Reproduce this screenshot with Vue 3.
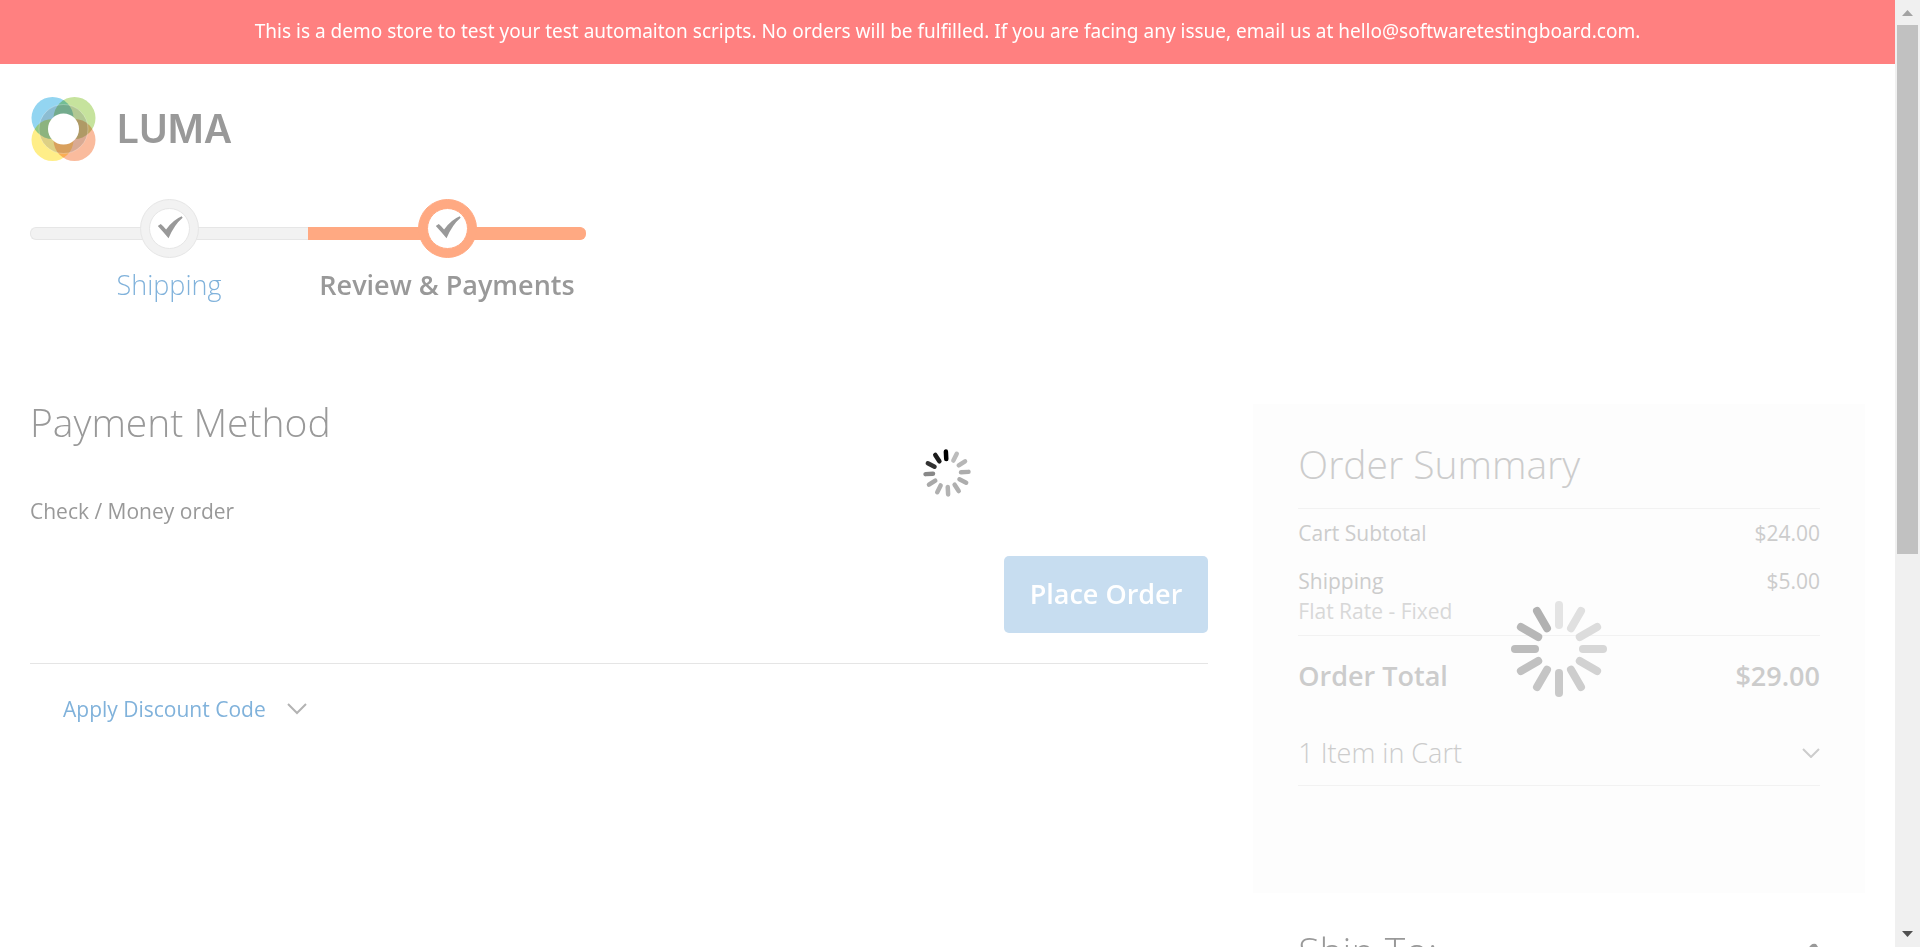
<script setup>
const spokes = (colors) => colors.map((color, i) => ({ color, angle: i * 30 }))

const pageSpokes = spokes([
  '#000000', '#bcbcbc', '#b6b6b6', '#adadad', '#adadad', '#b0b0b0',
  '#b3b3b3', '#b0b0b0', '#a9a9a9', '#888888', '#333333', '#1c1c1c',
])
const summarySpokes = spokes([
  '#e4e4e4', '#e0e0e0', '#dcdcdc', '#d7d7d7', '#d2d2d2', '#cdcdcd',
  '#c9c9c9', '#c5c5c5', '#c1c1c1', '#bcbcbc', '#b7b7b7', '#b1b1b1',
])

const steps = [
  { label: 'Shipping', active: false },
  { label: 'Review & Payments', active: true },
]
</script>

<template>
  <div class="window">
    <div class="page">
      <p class="notice">This is a demo store to test your test automaiton scripts. No orders will be fulfilled. If you are facing any issue, email us at hello@softwaretestingboard.com.</p>

      <header class="header">
        <a class="logo" href="#" aria-label="Luma home">
          <svg class="logo-mark" viewBox="0 0 66 66" aria-hidden="true">
            <g class="petals">
              <circle cx="22.500" cy="22" r="21" fill="#93d5f1" />
              <circle cx="44.500" cy="22" r="21" fill="#c6e39d" />
              <circle cx="22.500" cy="44" r="21" fill="#ffee88" />
              <circle cx="44.500" cy="44" r="21" fill="#fabb9d" />
            </g>
            <circle cx="33.500" cy="33" r="24.500" fill="#777777" fill-opacity="0.25" stroke="#ffffff" stroke-opacity="0.25" />
            <circle cx="33.500" cy="33" r="15.500" fill="#ffffff" />
          </svg>
          <span class="wordmark">LUMA</span>
        </a>
      </header>

      <ol class="steps">
        <li v-for="step in steps" :key="step.label" class="step" :class="{ active: step.active }">
          <span class="track"></span>
          <span class="dot">
            <svg viewBox="0 0 40 40" aria-hidden="true">
              <path d="M8 17.500 L11 15.500 Q13 17 16.500 21 Q24 11 32.500 7.500 L33.500 9 Q25 16 19 30 Q14 24 8 17.500 Z" fill="#999999" />
            </svg>
          </span>
          <a v-if="!step.active" class="step-label" href="#">{{ step.label }}</a>
          <span v-else class="step-label">{{ step.label }}</span>
        </li>
      </ol>

      <div class="checkout">
        <main class="payment">
          <h1 class="title">Payment Method</h1>
          <p class="method">Check / Money order</p>
          <div class="actions">
            <button type="button" class="place-order">Place Order</button>
          </div>
          <button type="button" class="discount">
            Apply Discount Code
            <svg class="discount-chevron" viewBox="0 0 20 12" aria-hidden="true">
              <path d="M1 1 L10 10 L19 1" fill="none" stroke="#b3b3b3" stroke-width="2" />
            </svg>
          </button>
        </main>

        <aside class="sidebar">
          <section class="summary">
            <h2 class="title">Order Summary</h2>
            <table class="totals">
              <tbody>
                <tr>
                  <th scope="row">Cart Subtotal</th>
                  <td>$24.00</td>
                </tr>
                <tr>
                  <th scope="row">Shipping<span class="rate">Flat Rate - Fixed</span></th>
                  <td>$5.00</td>
                </tr>
                <tr class="grand">
                  <th scope="row">Order Total</th>
                  <td>$29.00</td>
                </tr>
              </tbody>
            </table>
            <button type="button" class="items">
              1 Item in Cart
              <svg class="items-chevron" viewBox="0 0 18 10" aria-hidden="true">
                <path d="M1 1 L9 9 L17 1" fill="none" stroke="#cccccc" stroke-width="2" />
              </svg>
            </button>
            <svg class="spinner summary-spinner" viewBox="-48 -48 96 96" aria-hidden="true">
              <line v-for="s in summarySpokes" :key="s.angle" x1="0" y1="-44" x2="0" y2="-24" :stroke="s.color" stroke-width="8" stroke-linecap="round" :transform="`rotate(${s.angle})`" />
            </svg>
          </section>
          <section class="ship-to">
            <h2 class="title">Ship To:</h2>
            <button type="button" class="edit" aria-label="Edit shipping address">
              <svg viewBox="0 0 22 22" aria-hidden="true">
                <path d="M2 21 L3 16 L13 5 Q15 3 18 4 L20 7 Q21 9 19 10 L8 20 Z" fill="#999999" />
              </svg>
            </button>
          </section>
        </aside>
      </div>

      <svg class="spinner page-spinner" viewBox="-24 -24 50 50" aria-hidden="true">
        <line v-for="s in pageSpokes" :key="s.angle" x1="0" y1="-21.500" x2="0" y2="-14" :stroke="s.color" stroke-width="4.500" stroke-linecap="round" :transform="`rotate(${s.angle - 3})`" />
      </svg>
    </div>

    <div class="scrollbar" aria-hidden="true">
      <svg class="arrow" viewBox="0 0 25 25"><path d="M7 16 L12.500 10 L18 16 Z" fill="#a3a3a3" /></svg>
      <div class="rail"><div class="thumb"></div></div>
      <svg class="arrow" viewBox="0 0 25 25"><path d="M7 9 L12.500 15 L18 9 Z" fill="#505050" /></svg>
    </div>
  </div>
</template>

<style>
body {
  margin: 0;
  background: #ffffff;
}
</style>

<style scoped>
.window {
  display: flex;
  height: 100vh;
  overflow: hidden;
  font-family: "Open Sans", "Noto Sans", sans-serif;
  font-size: 21px;
  line-height: 30px;
  color: #999999;
}

.window * {
  box-sizing: border-box;
}

.page {
  position: relative;
  flex: 1;
  min-width: 0;
  overflow: hidden;
}

a {
  text-decoration: none;
}

button {
  padding: 0;
  border: 0;
  background: none;
  font: inherit;
  color: inherit;
  cursor: pointer;
}

.notice {
  margin: 0;
  padding: 17px 30px 19px;
  background: #ff8080;
  color: #ffffff;
  font-family: "Noto Sans", "Open Sans", sans-serif;
  font-size: 19px;
  line-height: 28px;
  text-align: center;
}

.header {
  padding: 32px 30px 0;
}

.logo {
  display: inline-flex;
  align-items: center;
  gap: 21px;
  vertical-align: top;
  color: #999999;
}

.logo-mark {
  width: 66px;
  height: 66px;
}

.petals circle {
  mix-blend-mode: multiply;
}

.petals {
  isolation: isolate;
}

.wordmark {
  font-family: Inter, "Open Sans", sans-serif;
  font-size: 39px;
  font-weight: 600;
  line-height: 48px;
}

.steps {
  display: flex;
  margin: 37px 30px 0;
  padding: 0;
  list-style: none;
}

.step {
  position: relative;
  display: flex;
  flex-direction: column;
  align-items: center;
  gap: 12px;
  width: 278px;
}

.track {
  position: absolute;
  top: 28px;
  left: 0;
  right: 0;
  height: 13px;
  border: 1px solid #e6e6e6;
  border-right: 0;
  border-radius: 6px 0 0 6px;
  background: #f2f2f2;
}

.dot {
  position: relative;
  display: flex;
  width: 59px;
  height: 59px;
  padding: 8px;
  border: 1px solid #e6e6e6;
  border-radius: 50%;
  background: #f2f2f2;
}

.dot svg {
  flex: 1;
  border: 1px solid #e6e6e6;
  border-radius: 50%;
  background: #ffffff;
}

.step-label {
  font-size: 27px;
  font-weight: 300;
  white-space: nowrap;
  color: #80b2db;
}

.active .track {
  border-color: #ffa982;
  border-radius: 0 6px 6px 0;
  background: #ffa982;
}

.active .dot {
  border-color: #ffa982;
  background: #ffa982;
}

.active .dot svg {
  border-color: #ffa982;
}

.active .step-label {
  font-weight: 600;
  color: #999999;
}

.checkout {
  display: grid;
  grid-template-columns: 2fr 1fr;
  margin: 104px 30px 0;
}

.payment {
  padding-right: 45px;
}

.title {
  margin: 0;
  font-size: 39px;
  font-weight: 300;
  line-height: 36px;
}

.method {
  margin: 56px 0 30px;
}

.actions {
  display: flex;
  justify-content: flex-end;
  padding-bottom: 30px;
  border-bottom: 1px solid #e5e5e5;
}

.place-order {
  padding: 23px 26px 24px;
  border-radius: 5px;
  background: #c7ddf0;
  color: #ffffff;
  font-size: 27px;
  font-weight: 600;
}

.discount {
  display: flex;
  align-items: center;
  gap: 21px;
  margin: 30px 0 0 33px;
  color: #80b2db;
}

.discount-chevron {
  width: 20px;
  height: 12px;
}

.summary {
  position: relative;
  padding: 42px 45px 107px;
  background: #fdfdfd;
  color: #cccccc;
}

.totals {
  width: 100%;
  margin-top: 26px;
  border-collapse: collapse;
  border-top: 1px solid #f2f2f2;
}

.totals th,
.totals td {
  padding: 9px 0;
  font-weight: 400;
  text-align: left;
  vertical-align: top;
}

.totals td {
  text-align: right;
}

.rate {
  display: block;
  color: #d8d8d8;
}

.totals .grand th,
.totals .grand td {
  padding: 25px 0 23px;
  border-top: 1px solid #f2f2f2;
  font-size: 27px;
  font-weight: 600;
}

.items {
  display: flex;
  align-items: center;
  justify-content: space-between;
  width: 100%;
  padding: 24px 0 17px;
  border-bottom: 1px solid #f2f2f2;
  font-size: 27px;
  font-weight: 300;
}

.items-chevron {
  width: 18px;
  height: 10px;
}

.ship-to {
  display: flex;
  justify-content: space-between;
  align-items: center;
  padding: 40px 45px 0;
}

.edit svg {
  display: block;
  width: 22px;
  height: 22px;
}

.spinner {
  position: absolute;
  top: 50%;
  left: 50%;
  transform: translate(-50%, -50%);
}

.page-spinner {
  width: 50px;
  height: 50px;
}

.summary-spinner {
  width: 96px;
  height: 96px;
}

.scrollbar {
  display: flex;
  flex-direction: column;
  width: 25px;
  background: #f0f0f0;
}

.arrow {
  width: 25px;
  height: 25px;
}

.rail {
  flex: 1;
  padding: 0 2px;
}

.thumb {
  height: 59%;
  background: #c1c1c1;
}
</style>
